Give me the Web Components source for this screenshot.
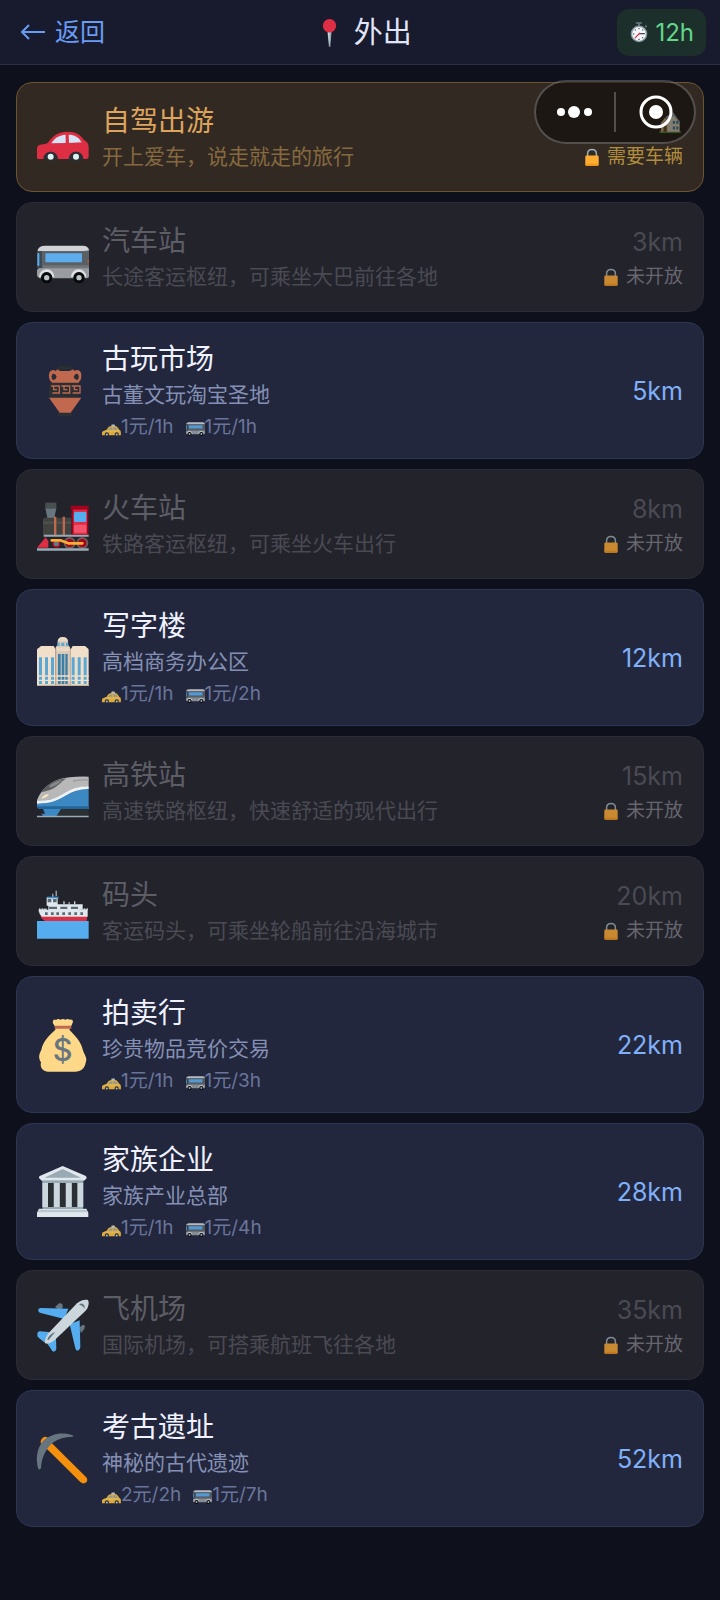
<!DOCTYPE html>
<html lang="zh-CN">
<head>
<meta charset="UTF-8">
<meta name="viewport" content="width=device-width, initial-scale=1.0">
<title>外出</title>
<style>
  body {
    margin: 0;
    min-height: 100vh;
    background-color: #0e101c;
    color: #f0f2ff;
    font-family: Inter, "Noto Sans CJK SC", sans-serif;
  }
</style>
</head>
<body>
<travel-header>
  <span slot="back">返回</span>
  <span slot="title">外出</span>
  <span slot="hours">12h</span>
</travel-header>
<mini-capsule></mini-capsule>
<place-list>
  <place-card kind="drive" icon="car" status="需要车辆">自驾出游<span slot="desc">开上爱车，说走就走的旅行</span><emoji-icon slot="distance" name="houses"></emoji-icon></place-card>
  <place-card kind="locked" icon="bus" status="未开放">汽车站<span slot="desc">长途客运枢纽，可乘坐大巴前往各地</span><span slot="distance">3km</span></place-card>
  <place-card icon="amphora" taxi="1元/1h" bus="1元/1h">古玩市场<span slot="desc">古董文玩淘宝圣地</span><span slot="distance">5km</span></place-card>
  <place-card kind="locked" icon="train" status="未开放">火车站<span slot="desc">铁路客运枢纽，可乘坐火车出行</span><span slot="distance">8km</span></place-card>
  <place-card icon="office" taxi="1元/1h" bus="1元/2h">写字楼<span slot="desc">高档商务办公区</span><span slot="distance">12km</span></place-card>
  <place-card kind="locked" icon="bullet" status="未开放">高铁站<span slot="desc">高速铁路枢纽，快速舒适的现代出行</span><span slot="distance">15km</span></place-card>
  <place-card kind="locked" icon="ship" status="未开放">码头<span slot="desc">客运码头，可乘坐轮船前往沿海城市</span><span slot="distance">20km</span></place-card>
  <place-card icon="moneybag" taxi="1元/1h" bus="1元/3h">拍卖行<span slot="desc">珍贵物品竞价交易</span><span slot="distance">22km</span></place-card>
  <place-card icon="temple" taxi="1元/1h" bus="1元/4h">家族企业<span slot="desc">家族产业总部</span><span slot="distance">28km</span></place-card>
  <place-card kind="locked" icon="plane" status="未开放">飞机场<span slot="desc">国际机场，可搭乘航班飞往各地</span><span slot="distance">35km</span></place-card>
  <place-card icon="pickaxe" taxi="2元/2h" bus="1元/7h">考古遗址<span slot="desc">神秘的古代遗迹</span><span slot="distance">52km</span></place-card>
</place-list>

<script>
const ICONS = {
  car: `
    <path fill="#dd2e44" d="M0 142 V114 C0 104 8 100 24 99 L33 95 C48 75 62 62 92 62 C116 62 132 72 141 87 C150 91 155 98 155 108 V136 Q155 144 147 144 H4 Q0 144 0 142 Z"/>
    <path fill="#d4e3f5" d="M43 97 C53 81 64 73 86 71 V96 Z M95 71 C112 71 126 79 134 94 L96 96 Z"/>
    <path fill="#272f36" d="M19 144 A22 22 0 0 1 63 144 Z M95 144 A22 22 0 0 1 139 144 Z"/>
    <circle cx="41" cy="137" r="15" fill="#292f33"/><circle cx="117" cy="137" r="15" fill="#292f33"/>
    <circle cx="41" cy="137" r="9" fill="#e0f3f3"/><circle cx="117" cy="137" r="9" fill="#e0f3f3"/>`,
  bus: `
    <path fill="#717579" d="M3 56 Q4 50 14 48 L150 48 Q156 50 156 58 V136 H3 Z"/>
    <path fill="#cfd3d6" d="M2 58 Q5 44 24 44 H138 Q152 44 156 57 Q150 60 138 60 H16 Q8 60 2 62 Z"/>
    <path fill="#3f4850" d="M0 60 H16 V112 H0 Z"/>
    <rect x="1" y="66" width="6" height="39" rx="3" fill="#55acee"/>
    <path fill="#999da1" d="M8 112 H156 V136 Q156 142 150 142 H8 Q0 140 0 132 V116 Z"/>
    <rect x="18" y="61" width="138" height="42" fill="#595f64"/>
    <rect x="25" y="67" width="110" height="27" rx="2" fill="#5dadec"/>
    <rect x="151" y="87" width="5" height="9" fill="#a45b3d"/>
    <path fill="#dce0e2" d="M6 138 A23 23 0 0 1 52 138 H44 A15 15 0 0 0 14 138 Z M102 138 A23 23 0 0 1 148 138 H140 A15 15 0 0 0 110 138 Z"/>
    <circle cx="29" cy="140" r="17" fill="#08090a"/><circle cx="126" cy="140" r="17" fill="#08090a"/>
    <circle cx="29" cy="140" r="8" fill="#b9c5ca"/><circle cx="126" cy="140" r="8" fill="#b9c5ca"/>`,
  taxi: `
    <path fill="#ffc23e" d="M0 150 V126 C4 116 16 110 36 106 L52 84 Q58 76 78 74 H108 Q124 76 130 88 L142 104 Q155 110 155 124 V150 Z"/>
    <rect x="77" y="62" width="29" height="15" rx="3" fill="#ccd6dd"/>
    <path fill="#a3adab" d="M50 105 L64 88 Q68 84 84 84 V105 Z M92 84 H106 Q114 85 120 92 L129 105 H92 Z"/>
    <path fill="#ffdb77" d="M26 112 H142 V120 H20 Z"/>
    <circle cx="40" cy="143" r="17" fill="#292f33"/><circle cx="121" cy="143" r="17" fill="#292f33"/>
    <circle cx="40" cy="143" r="8" fill="#ccd6dd"/><circle cx="121" cy="143" r="8" fill="#ccd6dd"/>`,
  amphora: `
    <path fill="#292f33" d="M64 2 H102 L106 14 H60 Z M44 52 H125 V98 H36 V60 Z M62 142 H104 V154 H62 Z"/>
    <path fill="#c1694f" d="M60 13 L70 18 H98 L109 13 L114 20 V30 Q115 42 127 53 H43 Q55 42 56 30 V20 Z"/>
    <path fill="#c1694f" fill-rule="evenodd" d="M50 15 C36 15 34 29 37 41 C39 50 46 53 54 50 L62 38 V20 Z M50 26 Q58 28 59 36 Q56 45 49 45 Q44 42 44 34 Q45 27 50 26 Z M119 15 C133 15 135 29 132 41 C130 50 123 53 115 50 L107 38 V20 Z M119 26 Q111 28 110 36 Q113 45 120 45 Q125 42 125 34 Q124 27 119 26 Z"/>
    <path fill="#292f33" d="M50 26 Q58 28 59 36 Q56 45 49 45 Q44 42 44 34 Q45 27 50 26 Z M119 26 Q111 28 110 36 Q113 45 120 45 Q125 42 125 34 Q124 27 119 26 Z"/>
    <path fill="none" stroke="#c1694f" stroke-width="4" d="M42 63 H67 V84 H46 M50 64 V74 H60 M73 63 H98 V84 H76 M81 64 V74 H91 M104 63 H129 V84 H107 M112 64 V74 H122"/>
    <path fill="#c1694f" d="M36 98 H133 L101 143 H68 Z"/>`,
  train: `
    <path fill="#66757f" d="M25 30 H58 L52 60 H31 Z"/>
    <rect x="25" y="14" width="33" height="18" fill="#494f51"/>
    <path fill="#40423f" d="M18 64 Q18 59 24 59 H103 V112 H18 Z"/>
    <path fill="#4e4e4b" d="M18 70 H103 V78 H18 Z"/>
    <path fill="#c1694f" d="M51 56 H58 V112 H51 Z M77 56 H84 V112 H77 Z"/>
    <path fill="#a0041e" d="M101 23 H155 V34 H101 Z M104 32 H154 V112 H104 Z"/>
    <path fill="#dd2e44" d="M109 35 H150 V108 H109 Z"/>
    <rect x="111" y="42" width="37" height="30" rx="4" fill="#55acee"/><rect x="111" y="80" width="37" height="24" rx="3" fill="#f4536d"/>
    <path fill="#dd2e44" d="M0 149 L26 118 L34 130 V149 Z"/>
    <circle cx="58" cy="137" r="13" fill="#a0041e"/><circle cx="98" cy="135" r="18" fill="#6f5a55"/><circle cx="136" cy="135" r="18" fill="#6f5a55"/>
    <circle cx="58" cy="137" r="8" fill="#66757f"/><circle cx="98" cy="135" r="12" fill="#a0041e"/><circle cx="136" cy="135" r="12" fill="#a0041e"/>
    <path fill="none" stroke="#ffac33" stroke-width="8" stroke-linecap="round" stroke-linejoin="round" d="M44 127 H70 L94 136 H136"/>
    <path fill="#99aab5" d="M20 110 H155 V116 H20 Z M0 151 H155 V158 H0 Z"/>`,
  office: `
    <path fill="#f2dfca" d="M0 54 Q0 49 5 48 L12 42 H50 L55 50 V162 H0 Z M102 50 L107 42 H144 L151 48 Q155 49 155 54 V162 H102 Z"/>
    <path fill="#d8c8b6" d="M56 46 L62 38 V28 Q63 16 77 15 Q91 16 93 28 V38 L99 46 V162 H56 Z"/>
    <path fill="#e9d8c4" d="M58 46 H98 V58 H58 Z M62 28 Q64 15 77 15 Q91 15 93 28 Z"/>
    <path fill="#5aa8d6" d="M61 32 H68 V42 H61 Z M73 32 H82 V42 H73 Z M87 32 H94 V42 H87 Z M6 76 H15 V156 H6 Z M24 76 H33 V156 H24 Z M42 76 H51 V156 H42 Z M104 76 H113 V156 H104 Z M122 76 H131 V156 H122 Z M140 76 H149 V156 H140 Z"/>
    <path fill="#3b7fa8" d="M63 66 H71 V156 H63 Z M74 66 H82 V156 H74 Z M85 66 H92 V156 H85 Z"/>
    <path fill="#f2dfca" d="M0 130 H155 V134 H0 Z M0 143 H155 V147 H0 Z"/>
    <path fill="#c3b29e" d="M55 50 H58 V162 H55 Z M99 50 H102 V162 H99 Z M0 158 H155 V162 H0 Z"/>`,
  bullet: `
    <path fill="#292f33" d="M60 128 H155 V153 H60 Z"/>
    <path fill="#3b88c3" d="M0 108 L60 96 L155 66 V132 H8 Q0 130 0 122 Z"/>
    <path fill="#226699" d="M0 124 H155 V132 H4 Z"/>
    <path fill="#3b88c3" d="M18 132 H72 L58 154 H20 L12 146 H24 Z"/>
    <path fill="#b8b8b8" d="M0 106 C14 72 42 42 98 37 Q122 34 155 35 V63 C126 67 112 72 90 84 C64 101 34 106 0 110 Z"/>
    <path fill="none" stroke="#f0f3f5" stroke-width="8" d="M0 112 C48 111 62 101 84 88 C104 74 124 69 155 67"/>
    <path fill="#5c5d5e" d="M14 82 C28 60 50 44 88 40 C68 54 60 68 36 76 Z"/>
    <path fill="#85898b" d="M36 63 Q54 48 78 44 L58 60 L40 68 Z"/>
    <path fill="#98999b" d="M108 46 Q130 42 155 43 V47 Q130 46 108 50 Z"/>
    <path fill="#ffe8c0" d="M14 98 Q25 86 36 88 Q28 99 14 100 Z"/>
    <path fill="#99aab5" d="M0 152 H155 V157 H0 Z"/>`,
  ship: `
    <path fill="#55acee" d="M0 108 H155 V161 H0 Z"/>
    <path fill="#dd2e44" d="M10 94 H151 L149 108 H24 Q14 104 10 94 Z"/>
    <path fill="#e1e8ed" d="M4 74 H152 V95 H14 Q7 88 4 74 Z M34 58 H137 V76 H34 Z M29 37 H62 V62 H29 Z"/>
    <path fill="#ccd6dd" d="M56 17 H59 V34 H56 Z M46 26 H49 V36 H46 Z M79 49 H83 V58 H79 Z M95 51 H98 V59 H95 Z M111 49 H115 V58 H111 Z"/>
    <path fill="#3b88c3" d="M31 35 H65 V40 H31 Z"/>
    <path fill="#596a76" d="M32 42 H43 V52 H32 Z M48 42 H59 V52 H48 Z M36 65 H60 V72 H36 Z M70 65 H91 V72 H70 Z M102 65 H123 V72 H102 Z M24 82 H32 V90 H24 Z M42 82 H50 V90 H42 Z M58 82 H66 V90 H58 Z M76 82 H84 V90 H76 Z M94 82 H102 V90 H94 Z M112 82 H120 V90 H112 Z M130 82 H138 V90 H130 Z"/>
    <path fill="none" stroke="#ccd6dd" stroke-width="3" d="M6 73 H30 M125 73 H153 M8 70 V76 M16 70 V76 M24 70 V76 M134 70 V76 M143 70 V76 M151 70 V76"/>`,
  moneybag: `
    <path fill="#fdd888" d="M55 32 C58 22 48 18 47 9 Q49 -1 57 3 Q63 -2 70 2 Q79 -2 85 2 Q92 -2 99 2 Q108 0 108 9 Q104 19 97 32 C112 48 132 67 137 91 C140 106 153 116 146 131 C143 147 133 158 114 158 H34 C17 158 8 145 12 130 C3 116 6 105 13 93 C17 68 36 50 55 32 Z"/>
    <path fill="#bf6952" d="M53 23 Q52 20 56 20 H100 Q104 20 103 24 V29 H53 Z"/>
    <text x="77" y="127" text-anchor="middle" font-family="Inter, sans-serif" font-size="92" font-weight="500" fill="#67757f">$</text>`,
  temple: `
    <path fill="#9aaab4" d="M17 44 H138 V132 H17 Z"/>
    <path fill="#292f33" d="M33 51 H50 V123 H33 Z M68 51 H86 V123 H68 Z M104 51 H121 V123 H104 Z"/>
    <path fill="#ccd6dd" d="M16 50 H33 V124 H16 Z M51 50 H68 V124 H51 Z M87 50 H104 V124 H87 Z M122 50 H139 V124 H122 Z"/>
    <path fill="#e1e8ed" d="M6 36 Q4 31 10 29 L77 0 L145 29 Q151 32 148 38 L141 44 H14 Z M6 128 H148 L154 140 V153 H0 V140 Z"/>
    <path fill="#9aaab4" d="M22 35 L77 9 L132 35 Z M16 44 H139 V51 H16 Z M18 123 H138 V129 H18 Z"/>
    <path fill="#bbc7cf" d="M6 131 H148 L153 139 H2 Z"/>`,
  plane: `
    <path fill="#66757f" d="M54 24 L66 13 Q72 11 76 16 L78 25 L68 34 Z M127 86 L135 79 Q142 76 144 82 L142 90 L132 103 Z"/>
    <path fill="#55acee" d="M4 36 Q2 28 12 27 L94 29 L82 60 L14 43 Q5 42 4 36 Z M128 64 L130 142 Q130 152 122 155 Q116 155 115 148 L98 76 Z M1 108 Q0 98 9 97 L35 99 L42 110 L22 130 L5 116 Q1 114 1 108 Z M57 119 L58 150 Q56 158 50 158 Q44 157 42 150 L30 133 L46 115 Z"/>
    <path fill="#ccd6dd" d="M153 3 C158 14 153 28 145 36 L54 122 Q36 137 24 133 Q21 124 34 103 L120 13 C132 3 144 1 153 3 Z"/>
    <path fill="#66757f" d="M126 18 Q132 11 138 15 Q145 20 142 29 Q136 17 126 18 Z M31 121 Q36 106 55 99 L34 124 Z"/>`,
  pickaxe: `
    <path fill="#f4900c" d="M11 29 Q10 18 21 12 Q31 8 41 27 L147 132 Q154 140 148 148 Q139 155 130 147 Z"/>
    <path fill="#66757f" d="M4 108 C-4 80 -2 48 18 24 C42 2 75 -4 107 7 Q112 10 106 11 C78 12 57 20 42 34 C26 50 14 75 12 104 Q10 112 4 108 Z"/>`,
  houses: `
    <path fill="#5c913b" d="M2 138 H142 V150 H2 Z"/>
    <path fill="#c9b183" d="M12 84 L40 48 L66 84 V142 H12 Z"/>
    <path fill="#e2d6c2" d="M56 80 L94 30 L134 80 V142 H56 Z"/>
    <path fill="#99a0a0" d="M42 46 L92 14 L138 78 L130 82 L94 34 L60 82 Z"/>
    <path fill="#4a8296" d="M90 72 H104 V90 H90 Z M112 72 H126 V90 H112 Z M90 108 H104 V126 H90 Z M112 108 H126 V126 H112 Z"/>
    <path fill="#7b5135" d="M30 104 H50 V142 H30 Z"/>`,
  lock: `
    <path fill="none" stroke="#9eb0ba" stroke-width="13" d="M40 76 V48 Q42 14 78 14 Q114 14 116 48 V76"/>
    <rect x="20" y="64" width="116" height="90" rx="12" fill="#ffac33"/>
    <path fill="#f7981c" d="M20 136 H136 V144 Q134 154 122 154 H34 Q21 154 20 144 Z"/>`,
  pin: `
    <path fill="#99aab5" d="M67 74 H89 L82 154 H75 Z"/>
    <path fill="#d5dde2" d="M70 78 H78 L77 146 Z"/>
    <circle cx="78" cy="42" r="36" fill="#dd2e44"/>`,
  stopwatch: `
    <path fill="#66757f" d="M51 -16 H104 V-2 H51 Z M70 -2 H86 V20 H70 Z M128 18 L138 8 L150 20 L138 32 Z"/>
    <circle cx="78" cy="86" r="72" fill="#8899a6"/><circle cx="78" cy="86" r="59" fill="#f5f8fa"/>
    <path stroke="#292f33" stroke-width="9" d="M78 34 V45 M78 127 V138 M26 86 H37 M42 49 L49 56 M114 49 L107 56 M114 123 L107 116"/>
    <path fill="none" stroke="#292f33" stroke-width="10" d="M77 84 H128"/>
    <path stroke="#dd2e44" stroke-width="10" stroke-linecap="round" d="M84 80 L44 120"/>`
};

class EmojiIcon extends HTMLElement {
  connectedCallback() {
    this.attachShadow({ mode: 'open' });
    this.shadowRoot.innerHTML = `
      <style>
        :host { display: inline-block; width: 1em; height: 1em; flex: none; }
        svg { display: block; width: 100%; height: 100%; overflow: visible; }
      </style>
      <svg viewBox="0 0 156 156" aria-hidden="true">${ICONS[this.getAttribute('name')]}</svg>
    `;
  }
}

class TravelHeader extends HTMLElement {
  connectedCallback() {
    this.attachShadow({ mode: 'open' });
    this.shadowRoot.innerHTML = `
      <style>
        :host { display: block; }
        header {
          display: flex;
          justify-content: space-between;
          align-items: center;
          padding: 9px 14px 8px 20px;
          background-color: #171b2d;
          border-bottom: 1px solid #2b2f40;
        }
        button {
          display: flex;
          align-items: center;
          gap: 9px;
          padding: 0 4px 2px 0;
          border: none;
          background: none;
          color: #6a9cf5;
          font: inherit;
          font-size: 25px;
          line-height: 36px;
          cursor: pointer;
        }
        .arrow { width: 26px; height: 20px; }
        h1 {
          display: flex;
          align-items: center;
          gap: 10px;
          margin: 0;
          color: #e0e5fa;
          font-size: 29px;
          font-weight: 400;
          line-height: 40px;
        }
        .hours {
          display: flex;
          align-items: center;
          gap: 7px;
          padding: 0 12px 0 13px;
          border-radius: 12px;
          background-color: #1d2f2a;
          color: #63d68c;
          font-size: 24px;
          line-height: 47px;
        }
        .hours emoji-icon { font-size: 18px; }
      </style>
      <header>
        <button type="button">
          <svg class="arrow" viewBox="0 0 26 20" fill="none" stroke="currentColor" stroke-width="2" aria-hidden="true"><path d="M25 10H3M9 3L2 10L9 17"/></svg>
          <slot name="back"></slot>
        </button>
        <h1><emoji-icon name="pin"></emoji-icon><slot name="title"></slot></h1>
        <div class="hours"><emoji-icon name="stopwatch"></emoji-icon><slot name="hours"></slot></div>
      </header>
    `;
  }
}

// Floating menu / close capsule in the top right corner
class MiniCapsule extends HTMLElement {
  connectedCallback() {
    this.attachShadow({ mode: 'open' });
    this.shadowRoot.innerHTML = `
      <style>
        :host {
          position: absolute;
          top: 80px;
          right: 24px;
          z-index: 10;
          display: flex;
          align-items: center;
          box-sizing: border-box;
          width: 162px;
          height: 64px;
          border: 2px solid rgba(255, 255, 255, 0.24);
          border-radius: 32px;
          background-color: rgba(0, 0, 0, 0.42);
        }
        button {
          display: grid;
          place-items: center;
          flex: 1;
          height: 100%;
          padding: 0;
          border: none;
          background: none;
          cursor: pointer;
        }
        i { width: 2px; height: 40px; background-color: rgba(255, 255, 255, 0.24); }
        svg { display: block; fill: #fff; }
      </style>
      <button type="button" aria-label="菜单"><svg width="36" height="36" viewBox="0 0 36 36"><circle cx="4" cy="18" r="4"/><circle cx="17" cy="18" r="6"/><circle cx="31" cy="18" r="4"/></svg></button>
      <i></i>
      <button type="button" aria-label="关闭"><svg width="36" height="36" viewBox="0 0 36 36"><circle cx="19" cy="18" r="15" fill="none" stroke="#fff" stroke-width="3"/><circle cx="19" cy="18" r="7"/></svg></button>
    `;
  }
}

class PlaceList extends HTMLElement {
  connectedCallback() {
    this.attachShadow({ mode: 'open' });
    this.shadowRoot.innerHTML = `
      <style>
        :host { display: block; }
        main {
          display: flex;
          flex-direction: column;
          gap: 10px;
          padding: 17px 16px;
        }
      </style>
      <main><slot></slot></main>
    `;
  }
}

class PlaceCard extends HTMLElement {
  connectedCallback() {
    const status = this.getAttribute('status');
    const taxi = this.getAttribute('taxi');
    const bus = this.getAttribute('bus');
    this.attachShadow({ mode: 'open' });
    this.shadowRoot.innerHTML = `
      <style>
        :host {
          display: block;
          --bg: #22273d;
          --line: #2c3754;
          --name: #f0f2ff;
          --desc: #8590b5;
          --distance: #80b0f8;
        }
        :host([kind="locked"]) {
          --bg: #23232c;
          --line: #2a2b36;
          --name: #5d5d66;
          --desc: #4a4a53;
          --distance: #4a4a53;
          --status: #66666e;
          --lock: 0.75;
        }
        :host([kind="drive"]) {
          --bg: #322923;
          --line: #6c5432;
          --name: #dca45d;
          --desc: #86693f;
          --status: #b18d3d;
          --lock: 1;
        }
        button {
          display: flex;
          align-items: center;
          gap: 13px;
          box-sizing: border-box;
          width: 100%;
          min-height: 110px;
          padding: 17px 20px;
          border: 1px solid var(--line);
          border-radius: 16px;
          background-color: var(--bg);
          font: inherit;
          text-align: left;
          cursor: pointer;
        }
        button:disabled { cursor: default; }
        .icon { font-size: 52px; }
        .info {
          display: flex;
          flex-direction: column;
          flex: 1;
          gap: 2px;
          min-width: 0;
        }
        .name { color: var(--name); font-size: 28px; line-height: 38px; }
        .desc { color: var(--desc); font-size: 21px; line-height: 30px; }
        .costs {
          display: flex;
          gap: 12px;
          color: #69759b;
          font-size: 19px;
          line-height: 29px;
        }
        .costs span { display: flex; align-items: center; }
        .costs emoji-icon { opacity: 0.85; }
        .side {
          display: flex;
          flex-direction: column;
          align-items: flex-end;
        }
        .distance {
          display: flex;
          align-items: center;
          min-height: 40px;
          color: var(--distance);
          font-size: 25px;
        }
        ::slotted(emoji-icon) { font-size: 24px; }
        .status {
          display: flex;
          align-items: center;
          gap: 6px;
          color: var(--status);
          font-size: 19px;
          line-height: 30px;
        }
        .status emoji-icon { font-size: 18px; opacity: var(--lock); }
      </style>
      <button type="button" ${this.getAttribute('kind') === 'locked' ? 'disabled' : ''}>
        <emoji-icon class="icon" name="${this.getAttribute('icon')}"></emoji-icon>
        <span class="info">
          <span class="name"><slot></slot></span>
          <span class="desc"><slot name="desc"></slot></span>
          ${taxi ? `<span class="costs">
            <span><emoji-icon name="taxi"></emoji-icon>${taxi}</span>
            <span><emoji-icon name="bus"></emoji-icon>${bus}</span>
          </span>` : ''}
        </span>
        <span class="side">
          <span class="distance"><slot name="distance"></slot></span>
          ${status ? `<span class="status"><emoji-icon name="lock"></emoji-icon>${status}</span>` : ''}
        </span>
      </button>
    `;
  }
}

customElements.define('emoji-icon', EmojiIcon);
customElements.define('travel-header', TravelHeader);
customElements.define('mini-capsule', MiniCapsule);
customElements.define('place-list', PlaceList);
customElements.define('place-card', PlaceCard);
</script>
</body>
</html>
